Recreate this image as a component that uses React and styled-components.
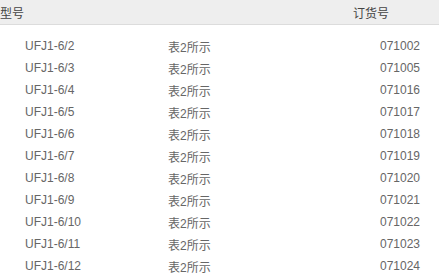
import React from 'react';
import styled, { createGlobalStyle } from 'styled-components';

const GlobalStyle = createGlobalStyle`
  body {
    margin: 0;
    background: #fff;
    font-family: "Liberation Sans", Arial, "Noto Sans CJK SC", sans-serif;
  }
`;

const rows = [
  ['UFJ1-6/2', '071002'],
  ['UFJ1-6/3', '071005'],
  ['UFJ1-6/4', '071016'],
  ['UFJ1-6/5', '071017'],
  ['UFJ1-6/6', '071018'],
  ['UFJ1-6/7', '071019'],
  ['UFJ1-6/8', '071020'],
  ['UFJ1-6/9', '071021'],
  ['UFJ1-6/10', '071022'],
  ['UFJ1-6/11', '071023'],
  ['UFJ1-6/12', '071024'],
];

const Table = styled.div`
  width: 439px;
  height: 279px;
  overflow: hidden;
`;

const Head = styled.div`
  display: grid;
  grid-template-columns: 1fr auto;
  align-items: center;
  height: 24px;
  padding-right: 50px;
  background: #eeeeee;
  border-bottom: 1px solid #dcdcdc;
  color: #444;
  font-size: 12px;
`;

const Body = styled.div`
  padding-top: 10px;
`;

const Row = styled.div`
  display: grid;
  grid-template-columns: 168px 1fr auto;
  align-items: center;
  height: 22px;
  padding-right: 19px;
  color: #666;
  font-size: 12px;
`;

const Model = styled.span`
  padding-left: 25px;
`;

const App = () => (
  <Table>
    <GlobalStyle />
    <Head>
      <span>型号</span>
      <span>订货号</span>
    </Head>
    <Body>
      {rows.map(([model, code]) => (
        <Row key={model}>
          <Model>{model}</Model>
          <span>表2所示</span>
          <span>{code}</span>
        </Row>
      ))}
    </Body>
  </Table>
);

export default App;
